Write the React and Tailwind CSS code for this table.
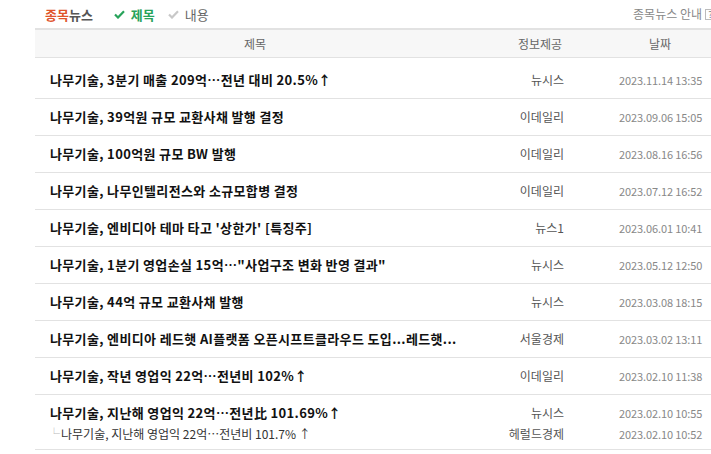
import React from "react";

const rows = [
  { t: "나무기술, 3분기 매출 209억…전년 대비 20.5%↑", s: "뉴시스", d: "2023.11.14 13:35" },
  { t: "나무기술, 39억원 규모 교환사채 발행 결정", s: "이데일리", d: "2023.09.06 15:05" },
  { t: "나무기술, 100억원 규모 BW 발행", s: "이데일리", d: "2023.08.16 16:56" },
  { t: "나무기술, 나무인텔리전스와 소규모합병 결정", s: "이데일리", d: "2023.07.12 16:52" },
  { t: "나무기술, 엔비디아 테마 타고 '상한가' [특징주]", s: "뉴스1", d: "2023.06.01 10:41" },
  { t: "나무기술, 1분기 영업손실 15억…\"사업구조 변화 반영 결과\"", s: "뉴시스", d: "2023.05.12 12:50" },
  { t: "나무기술, 44억 규모 교환사채 발행", s: "뉴시스", d: "2023.03.08 18:15" },
  { t: "나무기술, 엔비디아 레드햇 AI플랫폼 오픈시프트클라우드 도입...레드햇...", s: "서울경제", d: "2023.03.02 13:11" },
  { t: "나무기술, 작년 영업익 22억…전년비 102%↑", s: "이데일리", d: "2023.02.10 11:38" },
];

const font = { fontFamily: '"Noto Sans CJK KR", "Noto Sans", sans-serif' };

function Check({ color }) {
  return (
    <svg width="11" height="9" viewBox="0 0 11 9" className="mr-[6px]">
      <path d="M1 4.5 L4 7.5 L10 1.2" fill="none" stroke={color} strokeWidth="2.2" />
    </svg>
  );
}

export default function App() {
  return (
    <div className="w-[711px] h-[454px] overflow-hidden bg-white relative" style={font}>
      <div className="h-[28px] flex items-center pl-[45px] mr-[-5px]">
        <span className="text-[13px] font-bold text-[#e0542c] leading-none">종목</span>
        <span className="text-[13px] font-bold text-[#555] leading-none">뉴스</span>
        <span className="ml-[21px] flex items-center text-[13px] font-bold text-[#27a35a] leading-none">
          <Check color="#27a35a" />제목
        </span>
        <span className="ml-[13px] flex items-center text-[13px] text-[#666] leading-none">
          <Check color="#c8c8c8" />내용
        </span>
        <span className="ml-auto flex items-center text-[12px] text-[#888] leading-none">
          종목뉴스 안내
          <span className="ml-[3px] w-[11px] h-[11px] border border-[#bbb] text-[9px] text-[#888] flex items-center justify-center">?</span>
        </span>
      </div>
      <div className="ml-[35px] w-[680px] border-t-2 border-[#e2e2e2]">
        <div className="flex h-[28px] bg-[#f7f7f7] border-b border-[#e2e2e2] items-center text-[12px] text-[#666]">
          <div className="w-[440px] text-center">제목</div>
          <div className="w-[130px] text-center">정보제공</div>
          <div className="w-[110px] text-center">날짜</div>
        </div>
        <div className="pt-[4px]">
          {rows.map((r, i) => (
            <div key={i} className="flex h-[37px] items-center border-b border-[#e2e2e2]">
              <div className="w-[440px] pl-[15px] text-[13px] font-bold text-[#111] tracking-[0.35px] whitespace-nowrap overflow-hidden">{r.t}</div>
              <div className="w-[130px] pr-[41px] text-right text-[12px] text-[#555]">{r.s}</div>
              <div className="w-[110px] pl-[14px] text-[11px] text-[#888] tracking-[-0.1px]">{r.d}</div>
            </div>
          ))}
          <div className="flex flex-col justify-center h-[55px] border-b border-[#e2e2e2]">
            <div className="flex items-center h-[22px] mt-[2px]">
              <div className="w-[440px] pl-[15px] text-[13px] font-bold text-[#111] tracking-[0.35px] whitespace-nowrap">나무기술, 지난해 영업익 22억…전년比 101.69%↑</div>
              <div className="w-[130px] pr-[41px] text-right text-[12px] text-[#555]">뉴시스</div>
              <div className="w-[110px] pl-[14px] text-[11px] text-[#888] tracking-[-0.1px]">2023.02.10 10:55</div>
            </div>
            <div className="flex items-center h-[20px]">
              <div className="w-[440px] pl-[13px] text-[12px] text-[#333] whitespace-nowrap">
                <span className="text-[#bbb] mr-[1px]">└</span>나무기술, 지난해 영업익 22억…전년비 101.7% ↑
              </div>
              <div className="w-[130px] pr-[41px] text-right text-[12px] text-[#555]">헤럴드경제</div>
              <div className="w-[110px] pl-[14px] text-[11px] text-[#888] tracking-[-0.1px]">2023.02.10 10:52</div>
            </div>
          </div>
        </div>
      </div>
    </div>
  );
}
